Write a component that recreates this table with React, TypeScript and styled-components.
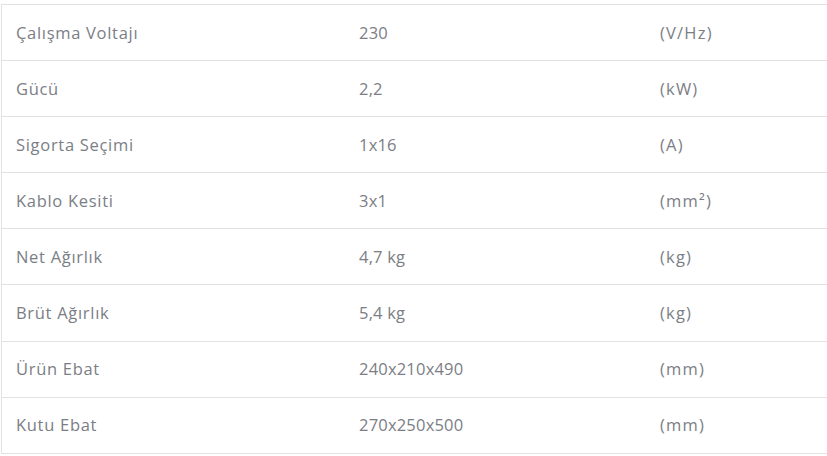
import React from 'react';
import styled, { createGlobalStyle } from 'styled-components';

const GlobalStyle = createGlobalStyle`
  html, body {
    margin: 0;
    padding: 0;
    background: #ffffff;
    overflow: hidden;
  }
`;

const Page = styled.div`
  padding: 4px 0 0 1px;
  font-family: 'Open Sans', 'Noto Sans', sans-serif;
`;

const SpecTable = styled.div`
  width: 840px;
  border-top: 1px solid #e2e2e2;
  border-left: 1px solid #e2e2e2;
`;

const Row = styled.div`
  display: grid;
  grid-template-columns: 343px 301px 1fr;
  height: 56.1px;
  padding-bottom: 1px;
  box-sizing: border-box;
  border-bottom: 1px solid #e2e2e2;
  align-items: center;
`;

const Cell = styled.div<{ $spacing: number }>`
  padding-left: 14px;
  font-size: 16.5px;
  letter-spacing: ${(p) => p.$spacing}px;
  color: #7b7e85;
  white-space: nowrap;
`;

const specs: [string, string, string][] = [
  ['Çalışma Voltajı', '230', '(V/Hz)'],
  ['Gücü', '2,2', '(kW)'],
  ['Sigorta Seçimi', '1x16', '(A)'],
  ['Kablo Kesiti', '3x1', '(mm²)'],
  ['Net Ağırlık', '4,7 kg', '(kg)'],
  ['Brüt Ağırlık', '5,4 kg', '(kg)'],
  ['Ürün Ebat', '240x210x490', '(mm)'],
  ['Kutu Ebat', '270x250x500', '(mm)'],
];

const App: React.FC = () => {
  return (
    <Page>
      <GlobalStyle />
      <SpecTable>
        {specs.map(([name, value, unit]) => (
          <Row key={name}>
            <Cell $spacing={0.7}>{name}</Cell>
            <Cell $spacing={0.2}>{value}</Cell>
            <Cell $spacing={1.2}>{unit}</Cell>
          </Row>
        ))}
      </SpecTable>
    </Page>
  );
};

export default App;
